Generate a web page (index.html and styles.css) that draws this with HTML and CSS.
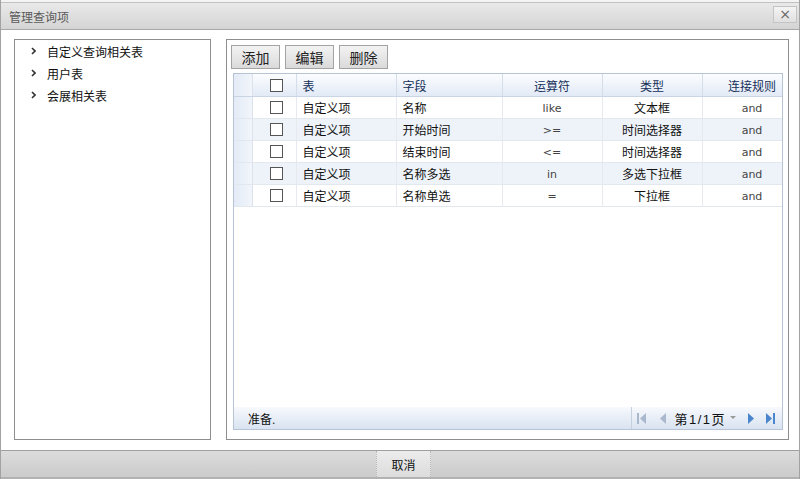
FILE: index.html
```html
<!DOCTYPE html>
<html lang="zh-CN">
<head>
  <meta charset="UTF-8">
  <title>管理查询项</title>
  <link rel="stylesheet" href="styles.css">
</head>
<body>
  <div class="dialog">
    <div class="titlebar">
      <span class="title">管理查询项</span>
      <span class="close">×</span>
    </div>

    <div class="dialog-body">
      <div class="tree">
        <ul>
          <li><svg class="arrow" width="5" height="8" viewBox="0 0 5 8"><path d="M1 1 L4 4 L1 7" fill="none" stroke="#333" stroke-width="1.6"/></svg>自定义查询相关表</li>
          <li><svg class="arrow" width="5" height="8" viewBox="0 0 5 8"><path d="M1 1 L4 4 L1 7" fill="none" stroke="#333" stroke-width="1.6"/></svg>用户表</li>
          <li><svg class="arrow" width="5" height="8" viewBox="0 0 5 8"><path d="M1 1 L4 4 L1 7" fill="none" stroke="#333" stroke-width="1.6"/></svg>会展相关表</li>
        </ul>
      </div>

      <div class="main">
        <div class="toolbar">
          <button class="tbtn">添加</button>
          <button class="tbtn">编辑</button>
          <button class="tbtn">删除</button>
        </div>

        <div class="grid">
          <div class="grid-scroll">
            <table>
              <colgroup>
                <col class="c-rn"><col class="c-cb"><col class="c-100"><col class="c-106"><col class="c-100"><col class="c-100"><col class="c-100">
              </colgroup>
              <thead>
                <tr>
                  <th class="rn"></th>
                  <th class="cb"><span class="check"></span></th>
                  <th class="left">表</th>
                  <th class="left">字段</th>
                  <th>运算符</th>
                  <th>类型</th>
                  <th>连接规则</th>
                </tr>
              </thead>
              <tbody>
                <tr>
                  <td class="rn"></td><td class="cb"><span class="check"></span></td>
                  <td class="left">自定义项</td><td class="left">名称</td><td class="op">like</td><td>文本框</td><td class="op">and</td>
                </tr>
                <tr>
                  <td class="rn"></td><td class="cb"><span class="check"></span></td>
                  <td class="left">自定义项</td><td class="left">开始时间</td><td class="op">&gt;=</td><td>时间选择器</td><td class="op">and</td>
                </tr>
                <tr>
                  <td class="rn"></td><td class="cb"><span class="check"></span></td>
                  <td class="left">自定义项</td><td class="left">结束时间</td><td class="op">&lt;=</td><td>时间选择器</td><td class="op">and</td>
                </tr>
                <tr>
                  <td class="rn"></td><td class="cb"><span class="check"></span></td>
                  <td class="left">自定义项</td><td class="left">名称多选</td><td class="op">in</td><td>多选下拉框</td><td class="op">and</td>
                </tr>
                <tr>
                  <td class="rn"></td><td class="cb"><span class="check"></span></td>
                  <td class="left">自定义项</td><td class="left">名称单选</td><td class="op">=</td><td>下拉框</td><td class="op">and</td>
                </tr>
              </tbody>
            </table>
          </div>

          <div class="statusbar">
            <span class="status-text">准备.</span>
            <div class="pager">
              <svg width="10" height="11" viewBox="0 0 10 11"><rect x="0" y="0" width="2" height="11" fill="#a9b8cc"/><path d="M9 0 L3 5.5 L9 11 Z" fill="#a9b8cc"/></svg>
              <svg class="prev" width="6" height="11" viewBox="0 0 6 11"><path d="M6 0 L0 5.5 L6 11 Z" fill="#a9b8cc"/></svg>
              <span class="page-text">第1/1页</span>
              <svg class="drop" width="6" height="4" viewBox="0 0 6 4"><path d="M0 0 L6 0 L3 3 Z" fill="#999"/></svg>
              <svg class="next" width="6" height="11" viewBox="0 0 6 11"><path d="M0 0 L6 5.5 L0 11 Z" fill="#4a86cc"/></svg>
              <svg width="10" height="11" viewBox="0 0 10 11"><path d="M1 0 L7 5.5 L1 11 Z" fill="#4a86cc"/><rect x="8" y="0" width="2" height="11" fill="#4a86cc"/></svg>
            </div>
          </div>
        </div>
      </div>
    </div>

    <div class="footer">
      <button class="cancel">取消</button>
    </div>
  </div>
</body>
</html>
```

FILE: styles.css
```css
body {
  margin: 0;
  width: 800px;
  height: 479px;
  overflow: hidden;
  font-family: "Liberation Sans", "Noto Sans CJK SC", sans-serif;
  font-size: 12px;
  color: #111;
  background: #f2f2f2;
}
.dialog {
  height: 479px;
  padding-top: 2px;
  box-sizing: border-box;
  display: flex;
  flex-direction: column;
  border-left: 1px solid #a2a2a2;
  border-right: 1px solid #a2a2a2;
  background: #f4f4f4;
}
.titlebar {
  height: 26px;
  display: flex;
  align-items: center;
  justify-content: space-between;
  padding: 0 2px 0 8px;
  border-top: 1px solid #c2c2c2;
  border-bottom: 1px solid #a8a8a8;
  background: linear-gradient(#e9e9e9, #d4d4d4);
}
.title {
  color: #5a5a5a;
  font-size: 12px;
}
.close {
  width: 22px;
  height: 15px;
  line-height: 14px;
  text-align: center;
  border: 1px solid #c4c4c4;
  background: linear-gradient(#f4f4f4, #e0e0e0);
  color: #666;
  font-size: 14px;
  font-family: "DejaVu Sans", sans-serif;
  margin-top: -4px;
}
.dialog-body {
  height: 420px;
  box-sizing: border-box;
  display: flex;
  padding: 9px 10px 10px 13px;
  background: #fff;
}
.tree {
  flex: 0 0 197px;
  box-sizing: border-box;
  border: 1px solid #8e8e8e;
  margin-right: 15px;
}
.tree ul {
  list-style: none;
  margin: 0;
  padding: 0;
}
.tree li {
  height: 22px;
  display: flex;
  align-items: center;
  padding-left: 16px;
}
.arrow {
  margin-right: 11px;
}
.main {
  flex: 1;
  min-width: 0;
  border: 1px solid #8e8e8e;
  display: flex;
  flex-direction: column;
}
.toolbar {
  display: flex;
  gap: 5px;
  padding: 5px 0 0 4px;
}
.tbtn {
  width: 49px;
  height: 24px;
  padding: 0;
  border: 1px solid #a3a3a3;
  background: linear-gradient(#f3f3f3, #dadada);
  font-family: "Noto Sans CJK SC", sans-serif;
  font-size: 14px;
  color: #222;
}
.grid {
  flex: 1;
  min-width: 0;
  margin: 4px 5px 9px 6px;
  border: 1px solid #b7c4d6;
  display: flex;
  flex-direction: column;
}
.grid-scroll {
  flex: 1;
  overflow: hidden;
}
table {
  border-collapse: collapse;
  table-layout: fixed;
  width: 568px;
}
.c-rn { width: 18px; }
.c-cb { width: 44px; }
.c-100 { width: 100px; }
.c-106 { width: 106px; }
th {
  height: 22px;
  padding: 0;
  font-weight: normal;
  color: #15305a;
  background: linear-gradient(#fbfcfe, #e2eaf6);
  border-right: 1px solid #d5dde8;
  border-bottom: 1px solid #c9d5e5;
  text-align: center;
}
td {
  height: 21px;
  padding: 0;
  text-align: center;
  border-right: 1px solid #e6e9ee;
  border-bottom: 1px solid #e3e8ef;
}
tbody tr:nth-child(even) td {
  background: #eef3fa;
}
th.left, td.left {
  text-align: left;
  padding-left: 6px;
}
td.op {
  height: 19px;
  padding-top: 2px;
  font-family: "DejaVu Sans", sans-serif;
  font-size: 11px;
  color: #444;
}
th.rn, td.rn, tbody tr:nth-child(even) td.rn {
  background: linear-gradient(to right, #e4ebf6, #f1f5fb);
  border-right: 1px solid #dde3ec;
}
th.cb, td.cb {
  text-align: left;
  padding-left: 17px;
}
.check {
  display: block;
  width: 11px;
  height: 11px;
  border: 1px solid #555;
  background: #fff;
}
.statusbar {
  height: 22px;
  display: flex;
  align-items: center;
  justify-content: space-between;
  background: linear-gradient(#f7f9fc, #d9e3f1);
}
.status-text {
  padding-left: 14px;
}
.pager {
  height: 100%;
  display: flex;
  align-items: center;
  border-left: 1px solid #c5d0df;
  padding: 0 7px 0 5px;
}
.prev {
  margin-left: 13px;
}
.page-text {
  margin-left: 8px;
  font-size: 13px;
  letter-spacing: 1.5px;
}
.drop {
  margin-left: 4px;
}
.next {
  margin-left: 12px;
  margin-right: 11px;
}
.footer {
  flex: 1;
  display: flex;
  justify-content: center;
  border-top: 1px solid #a0a0a0;
  border-bottom: 2px solid #b2b2b2;
  background: linear-gradient(#dcdcdc, #cbcbcb);
}
.cancel {
  width: 55px;
  margin-left: 7px;
  padding: 0;
  border: none;
  border-left: 1px dotted #b8b8b8;
  border-right: 1px dotted #b8b8b8;
  background: linear-gradient(#ececec, #dcdcdc);
  font-family: "Noto Sans CJK SC", sans-serif;
  font-size: 12px;
  color: #111;
}
```
